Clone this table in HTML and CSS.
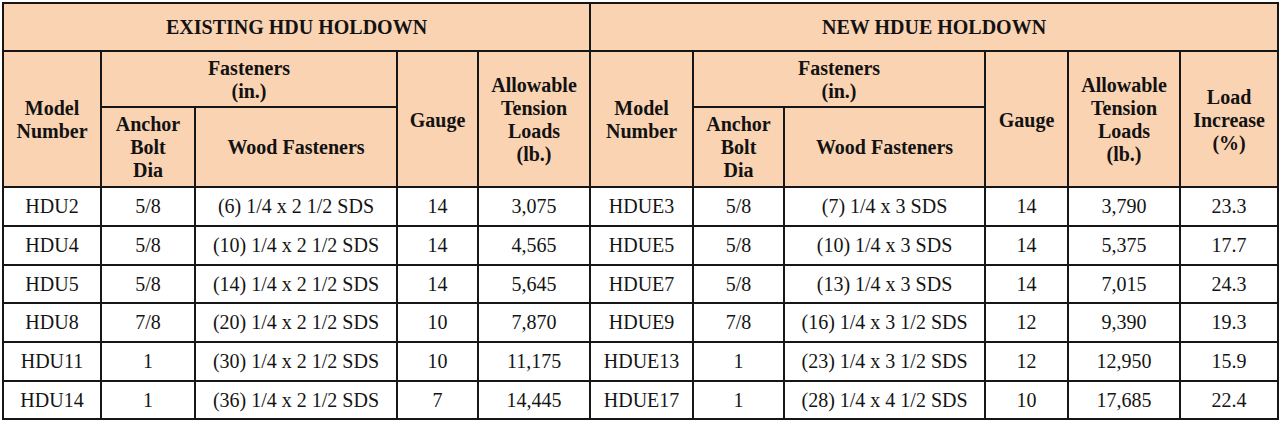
FILE: index.html
```html
<!DOCTYPE html>
<html>
<head>
<meta charset="utf-8">
<link rel="stylesheet" href="styles.css">
</head>
<body>
<table class="hd">
  <colgroup>
    <col class="c1"><col class="c2"><col class="c3"><col class="c4"><col class="c5">
    <col class="c6"><col class="c7"><col class="c8"><col class="c9"><col class="c10"><col class="c11">
  </colgroup>
  <thead>
    <tr class="r-title">
      <th colspan="5">EXISTING HDU HOLDOWN</th>
      <th colspan="6">NEW HDUE HOLDOWN</th>
    </tr>
    <tr class="r-group">
      <th rowspan="2">Model<br>Number</th>
      <th colspan="2">Fasteners<br>(in.)</th>
      <th rowspan="2">Gauge</th>
      <th rowspan="2">Allowable<br>Tension<br>Loads<br>(lb.)</th>
      <th rowspan="2">Model<br>Number</th>
      <th colspan="2">Fasteners<br>(in.)</th>
      <th rowspan="2">Gauge</th>
      <th rowspan="2">Allowable<br>Tension<br>Loads<br>(lb.)</th>
      <th rowspan="2">Load<br>Increase<br>(%)</th>
    </tr>
    <tr class="r-sub">
      <th>Anchor<br>Bolt<br>Dia</th>
      <th>Wood Fasteners</th>
      <th>Anchor<br>Bolt<br>Dia</th>
      <th>Wood Fasteners</th>
    </tr>
  </thead>
  <tbody>
    <tr><td>HDU2</td><td>5/8</td><td>(6) 1/4 x 2 1/2 SDS</td><td>14</td><td>3,075</td><td>HDUE3</td><td>5/8</td><td>(7) 1/4 x 3 SDS</td><td>14</td><td>3,790</td><td>23.3</td></tr>
    <tr><td>HDU4</td><td>5/8</td><td>(10) 1/4 x 2 1/2 SDS</td><td>14</td><td>4,565</td><td>HDUE5</td><td>5/8</td><td>(10) 1/4 x 3 SDS</td><td>14</td><td>5,375</td><td>17.7</td></tr>
    <tr><td>HDU5</td><td>5/8</td><td>(14) 1/4 x 2 1/2 SDS</td><td>14</td><td>5,645</td><td>HDUE7</td><td>5/8</td><td>(13) 1/4 x 3 SDS</td><td>14</td><td>7,015</td><td>24.3</td></tr>
    <tr><td>HDU8</td><td>7/8</td><td>(20) 1/4 x 2 1/2 SDS</td><td>10</td><td>7,870</td><td>HDUE9</td><td>7/8</td><td>(16) 1/4 x 3 1/2 SDS</td><td>12</td><td>9,390</td><td>19.3</td></tr>
    <tr><td>HDU11</td><td>1</td><td>(30) 1/4 x 2 1/2 SDS</td><td>10</td><td>11,175</td><td>HDUE13</td><td>1</td><td>(23) 1/4 x 3 1/2 SDS</td><td>12</td><td>12,950</td><td>15.9</td></tr>
    <tr><td>HDU14</td><td>1</td><td>(36) 1/4 x 2 1/2 SDS</td><td>7</td><td>14,445</td><td>HDUE17</td><td>1</td><td>(28) 1/4 x 4 1/2 SDS</td><td>10</td><td>17,685</td><td>22.4</td></tr>
  </tbody>
</table>
</body>
</html>
```

FILE: styles.css
```css
html, body {
  margin: 0;
  padding: 0;
  background: #ffffff;
}

body {
  padding: 2px 0 0 2px;
  font-family: "Liberation Serif", "Times New Roman", serif;
  color: #141414;
}

.hd {
  border-collapse: collapse;
  table-layout: fixed;
  width: 1276px;
}

.c1 { width: 98px; }
.c2 { width: 94px; }
.c3 { width: 202px; }
.c4 { width: 81px; }
.c5 { width: 112px; }
.c6 { width: 103px; }
.c7 { width: 91px; }
.c8 { width: 201px; }
.c9 { width: 83px; }
.c10 { width: 112px; }
.c11 { width: 98px; }

.hd th,
.hd td {
  border: 2px solid #161616;
  padding: 0;
  text-align: center;
  vertical-align: middle;
}

.hd th {
  background: #fad3b2;
  font-weight: bold;
  font-size: 20px;
  line-height: 23px;
  color: #121212;
}

.r-title th { height: 46px; }
.r-group th { height: 52px; padding-top: 2px; }
.r-sub th { height: 78px; }

.hd td {
  background: #ffffff;
  font-size: 20px;
  line-height: 23px;
  height: 37px;
}

.hd tbody tr:nth-child(3n) td {
  height: 36px;
}
```
